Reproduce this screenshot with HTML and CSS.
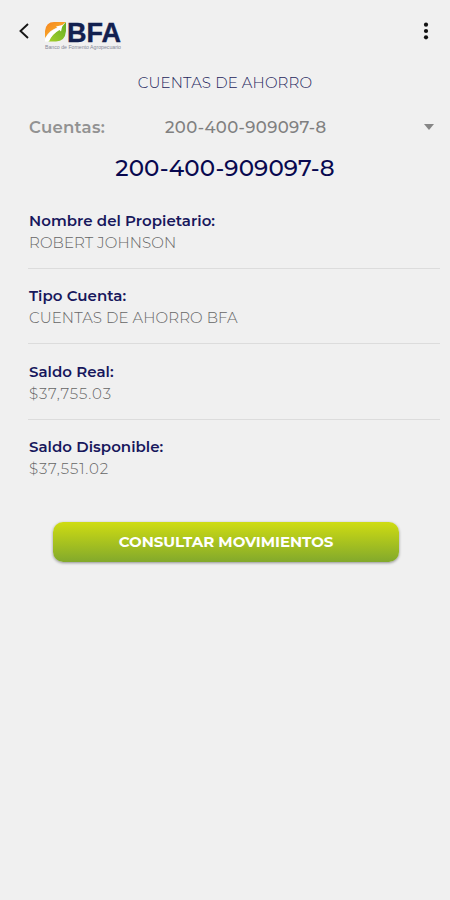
FILE: index.html
```html
<!DOCTYPE html>
<html lang="es">
<head>
<meta charset="UTF-8">
<meta name="viewport" content="width=device-width, initial-scale=1.0">
<title>Cuentas de Ahorro</title>
<link rel="stylesheet" href="styles.css">
</head>
<body>

<!-- Barra superior -->
<header class="topbar">
  <svg class="back" width="12" height="18" viewBox="0 0 12 18">
    <path d="M10 2 L2.500 9 L10 16" fill="none" stroke="#151515" stroke-width="1.900"/>
  </svg>
  <svg class="logo" width="80" height="44" viewBox="0 -6 80 44">
    <defs>
      <linearGradient id="orange" x1="0" y1="0" x2="1" y2="1">
        <stop offset="0" stop-color="#f58220"/>
        <stop offset="1" stop-color="#fbc52d"/>
      </linearGradient>
      <linearGradient id="green" x1="0" y1="1" x2="1" y2="0">
        <stop offset="0" stop-color="#a5cf2c"/>
        <stop offset="1" stop-color="#63ae22"/>
      </linearGradient>
    </defs>
    <path d="M1 18 V11 Q2 2 10 2 H22 L17 6 Q6 9 1 18 Z" fill="url(#orange)"/>
    <path d="M4 21.500 Q9 13 17 8 L22 2 V11 Q21 21.500 12 21.500 Z" fill="url(#green)"/>
    <path d="M1 21.500 V19 Q5 11 13.500 8 L12 6.500 L18.500 5 L17 11.500 L15.500 10 Q8 14 5 21.500 Z" fill="#fff"/>
    <text class="logo-name" x="23" y="21.500" textLength="54" lengthAdjust="spacingAndGlyphs">BFA</text>
    <text class="logo-tag" x="1" y="28.500" textLength="76" lengthAdjust="spacingAndGlyphs">Banco de Fomento Agropecuario</text>
  </svg>
  <svg class="menu" width="6" height="18" viewBox="0 0 6 18">
    <circle cx="3" cy="2.700" r="2.100"/>
    <circle cx="3" cy="9" r="2.100"/>
    <circle cx="3" cy="15.300" r="2.100"/>
  </svg>
</header>

<main>
  <h1 class="title">CUENTAS DE AHORRO</h1>

  <div class="selector">
    <span class="selector-label">Cuentas:</span>
    <span class="selector-value">200-400-909097-8</span>
    <span class="caret"></span>
  </div>

  <h2 class="account">200-400-909097-8</h2>

  <!-- Detalle de la cuenta -->
  <dl class="details">
    <div class="item">
      <dt>Nombre del Propietario:</dt>
      <dd>ROBERT JOHNSON</dd>
    </div>
    <div class="item">
      <dt>Tipo Cuenta:</dt>
      <dd>CUENTAS DE AHORRO BFA</dd>
    </div>
    <div class="item">
      <dt>Saldo Real:</dt>
      <dd class="amount">$37,755.03</dd>
    </div>
    <div class="item">
      <dt>Saldo Disponible:</dt>
      <dd class="amount">$37,551.02</dd>
    </div>
  </dl>

  <button class="btn">CONSULTAR MOVIMIENTOS</button>
</main>

</body>
</html>
```
FILE: styles.css
```css
* {
  box-sizing: border-box;
}
body {
  margin: 0;
  min-height: 100vh;
  background-color: #f0f0f0;
  font-family: Montserrat, Inter, sans-serif;
  color: #666;
}
.topbar {
  display: flex;
  align-items: center;
  height: 62px;
  padding: 0 21px 0 18px;
}
.logo {
  margin: 9px 0 0 14px;
}
.logo-name {
  font-family: "Liberation Sans", Arial, sans-serif;
  font-size: 27px;
  font-weight: 700;
  fill: #12204f;
  stroke: #12204f;
  stroke-width: 0.4px;
}
.logo-tag {
  font-family: "Liberation Sans", Arial, sans-serif;
  font-size: 5px;
  fill: #858998;
}
.menu {
  margin-left: auto;
  fill: #111;
}
.title {
  margin: 10px 0 0;
  height: 22px;
  line-height: 22px;
  font-size: 15px;
  font-weight: 300;
  letter-spacing: 0.14px;
  text-align: center;
  color: #25265c;
}
.selector {
  display: flex;
  align-items: center;
  height: 32px;
  margin-top: 17px;
  padding: 0 16px 0 29px;
  font-size: 16.5px;
  font-weight: 500;
  color: #808080;
}
.selector-label {
  width: 136px;
  font-weight: 600;
  letter-spacing: 0.3px;
  color: #929292;
}
.selector-value {
  letter-spacing: 0.35px;
}
.caret {
  margin-left: auto;
  border: 5.500px solid transparent;
  border-top: 6px solid #868686;
  border-bottom: 0;
}
.account {
  margin: 9px 0 0;
  height: 32px;
  line-height: 33px;
  font-size: 23px;
  font-weight: 500;
  letter-spacing: 0.12px;
  text-align: center;
  color: #08084f;
}
.details {
  margin: 9px 10px 0 28px;
}
.item {
  height: 75.500px;
  padding: 16.500px 0 0 1px;
  border-bottom: 1px solid #dcdcdc;
  line-height: 22px;
  font-size: 15px;
}
.item:last-child {
  border-bottom: 0;
}
dt {
  font-weight: 600;
  color: #17175c;
  letter-spacing: 0.04px;
}
dd {
  margin: 0;
  font-weight: 300;
  letter-spacing: 0.1px;
}
.amount {
  letter-spacing: 0.9px;
}
.btn {
  display: block;
  width: 346px;
  height: 40px;
  margin: 27px 0 0 53px;
  padding: 0 0 1px;
  border: 0;
  border-radius: 10px;
  background: linear-gradient(#cfdc12, #82a92c);
  box-shadow: 0 1px 3px rgba(0, 0, 0, 0.4);
  color: #fff;
  font-family: inherit;
  font-size: 15px;
  font-weight: 700;
  letter-spacing: -0.03px;
}
```
